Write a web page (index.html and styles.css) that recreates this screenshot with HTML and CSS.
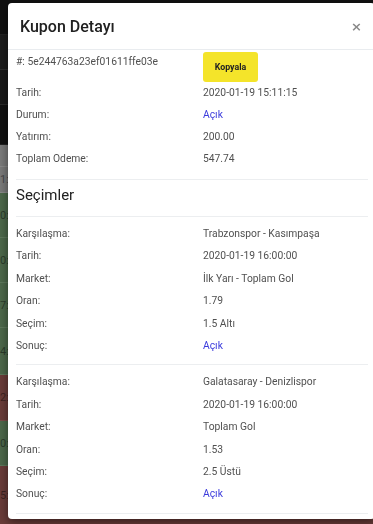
FILE: index.html
```html
<!DOCTYPE html>
<html lang="tr">
<head>
    <meta charset="UTF-8">
    <meta name="viewport" content="width=device-width, initial-scale=1.0">
    <title>Kupon Detayı</title>
    <link rel="stylesheet" href="styles.css">
</head>
<body>
    <div class="page">
        <div class="bg-row bg-black" style="height: 35px"></div>
        <div class="bg-row bg-dark" style="height: 35px"></div>
        <div class="bg-row bg-dark2" style="height: 35px"></div>
        <div class="bg-row bg-black" style="height: 40px"></div>
        <div class="bg-row bg-gray" style="height: 22px"></div>
        <div class="bg-row bg-gray" style="height: 26px"><span>1:</span></div>
        <div class="bg-row bg-green" style="height: 45px"><span>0:2</span></div>
        <div class="bg-row bg-green" style="height: 45px"><span>0:2</span></div>
        <div class="bg-row bg-green" style="height: 45px"><span>7:0</span></div>
        <div class="bg-row bg-green" style="height: 47px"><span>4:5</span></div>
        <div class="bg-row bg-red" style="height: 46px"><span>2:4</span></div>
        <div class="bg-row bg-green" style="height: 45px"><span>0:5</span></div>
        <div class="bg-row bg-red" style="height: 60px"><span>5:3</span></div>
    </div>

    <div class="modal">
        <div class="modal-header">
            <h5>Kupon Detayı</h5>
            <button class="close">&times;</button>
        </div>
        <div class="modal-body">
            <div class="section first">
                <div class="row row-id">
                    <span>#: 5e244763a23ef01611ffe03e</span>
                    <span><button class="copy">Kopyala</button></span>
                </div>
                <div class="row"><span>Tarih:</span><span>2020-01-19 15:11:15</span></div>
                <div class="row"><span>Durum:</span><span class="open">Açık</span></div>
                <div class="row"><span>Yatırım:</span><span>200.00</span></div>
                <div class="row"><span>Toplam Odeme:</span><span>547.74</span></div>
            </div>

            <h4 class="section-title">Seçimler</h4>

            <div class="section">
                <div class="row"><span>Karşılaşma:</span><span>Trabzonspor - Kasımpaşa</span></div>
                <div class="row"><span>Tarih:</span><span>2020-01-19 16:00:00</span></div>
                <div class="row"><span>Market:</span><span>İlk Yarı - Toplam Gol</span></div>
                <div class="row"><span>Oran:</span><span>1.79</span></div>
                <div class="row"><span>Seçim:</span><span>1.5 Altı</span></div>
                <div class="row"><span>Sonuç:</span><span class="open">Açık</span></div>
            </div>

            <div class="section">
                <div class="row"><span>Karşılaşma:</span><span>Galatasaray - Denizlispor</span></div>
                <div class="row"><span>Tarih:</span><span>2020-01-19 16:00:00</span></div>
                <div class="row"><span>Market:</span><span>Toplam Gol</span></div>
                <div class="row"><span>Oran:</span><span>1.53</span></div>
                <div class="row"><span>Seçim:</span><span>2.5 Üstü</span></div>
                <div class="row"><span>Sonuç:</span><span class="open">Açık</span></div>
            </div>
        </div>
    </div>
</body>
</html>
```

FILE: styles.css
```css
html, body {
    margin: 0;
    padding: 0;
    height: 100%;
    overflow: hidden;
    background-color: #111;
    font-family: Roboto, "Liberation Sans", Arial, sans-serif;
}
.page {
    display: flex;
    flex-direction: column;
}
.bg-row {
    border-bottom: 1px solid rgba(255, 255, 255, 0.08);
    box-sizing: border-box;
    font-size: 11px;
    color: rgba(0, 0, 0, 0.45);
    display: flex;
    align-items: center;
}
.bg-black {
    background-color: #111;
}
.bg-dark {
    background-color: #1d1d1d;
}
.bg-dark2 {
    background-color: #181818;
}
.bg-gray {
    background-color: #7a7a7a;
    border-bottom-color: #8a8a8a;
}
.bg-green {
    background-color: #4c684a;
    border-bottom-color: #5d785b;
}
.bg-red {
    background-color: #6a3c39;
    border-bottom-color: #7a4c49;
}

.modal {
    position: fixed;
    top: 3px;
    left: 8px;
    width: 367px;
    height: 516px;
    background-color: #fff;
    border-radius: 4px;
    overflow: hidden;
    box-shadow: 0 3px 10px rgba(0, 0, 0, 0.5);
}
.modal-header {
    display: flex;
    align-items: center;
    justify-content: space-between;
    height: 46px;
    padding: 0 12px;
    border-bottom: 1px solid #e9ecef;
}
.modal-header h5 {
    margin: 0;
    font-size: 16px;
    font-weight: 500;
    color: #212121;
}
.close {
    border: none;
    background: none;
    padding: 0;
    font-family: "DejaVu Sans", sans-serif;
    font-size: 13px;
    font-weight: bold;
    color: #8a8a8a;
    margin-right: 1px;
    line-height: 1;
}
.modal-body {
    padding: 0 7px 0 8px;
}
.section {
    padding: 6px 0 7px;
    border-bottom: 1px solid #eceef0;
}
.section.first {
    padding: 1px 0 9px;
}
.row {
    display: grid;
    grid-template-columns: 187px 1fr;
    font-size: 10.3px;
    line-height: 22.4px;
    height: 22.4px;
    color: #505050;
}
.section.first .row {
    height: 22px;
    line-height: 22px;
}
.section.first .row-id {
    height: 31px;
}
.copy {
    margin-top: 1px;
    height: 30px;
    width: 55px;
    border: none;
    border-radius: 3px;
    background-color: #f4e42a;
    color: #222;
    font-family: Roboto, sans-serif;
    font-size: 8.8px;
    font-weight: bold;
    padding: 0;
}
.open {
    color: #3b3bdc;
}
.section-title {
    margin: 0;
    padding: 4px 0 10px;
    font-size: 15px;
    font-weight: 400;
    line-height: 22px;
    color: #222;
    border-bottom: 1px solid #eceef0;
}
```
